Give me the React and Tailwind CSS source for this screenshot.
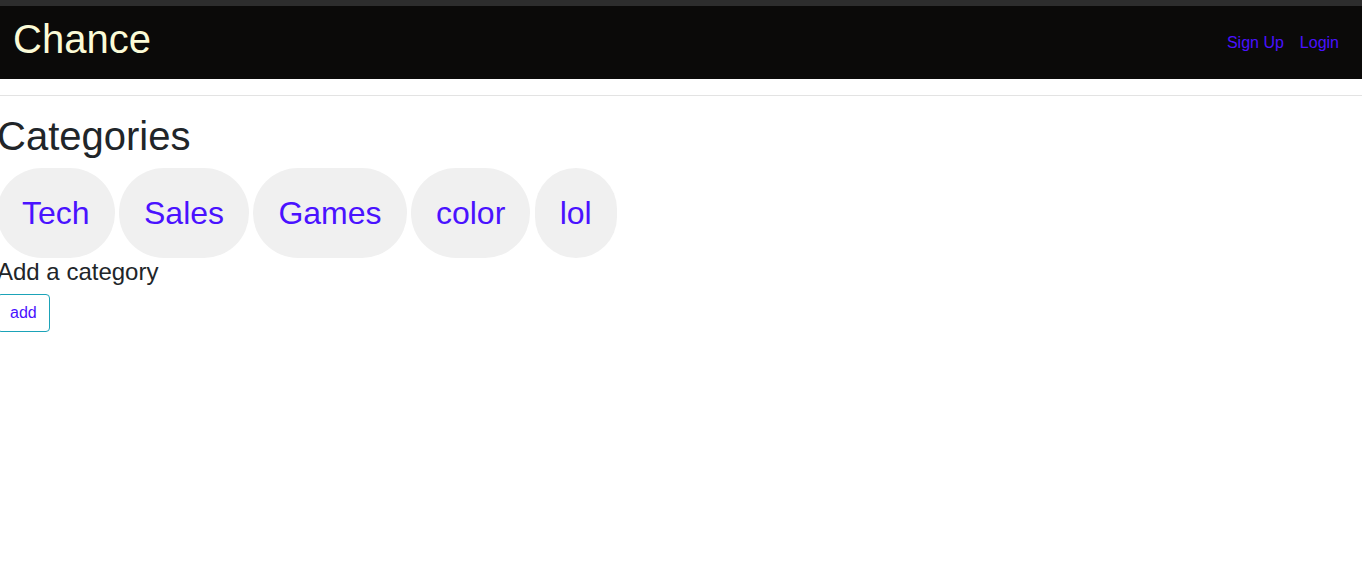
export default function App() {
  const cats = ["Tech", "Sales", "Games", "color", "lol"];
  return (
    <div className="min-h-[566px] bg-white" style={{ fontFamily: '"Liberation Sans", Arial, sans-serif' }}>
      <div className="h-[6px] bg-[#2d2d2d]" />
      <nav className="h-[73px] bg-[#0b0a09] flex items-start justify-between pl-[13px] pr-[23px]">
        <div className="text-[40px] leading-[48px] mt-[9px] text-[#fbfbd7]">Chance</div>
        <div className="flex gap-[16px] mt-[27px] text-[16px] leading-[20px] text-[#4a12ff]">
          <a>Sign Up</a>
          <a>Login</a>
        </div>
      </nav>
      <hr className="mt-[16px] mb-[16px] border-0 border-t border-[#e3e3e3]" />
      <div className="-ml-[3px] text-[#212529]">
        <h1 className="text-[40px] leading-[48px] mb-[8px]">Categories</h1>
        <div className="flex gap-[4.4px]">
          {cats.map((c) => (
            <div key={c} className="rounded-full bg-[#f0f0f0] px-[25px] py-[21px] text-[32px] leading-[48px] text-[#4a12ff]">
              {c}
            </div>
          ))}
        </div>
        <h4 className="text-[24px] leading-[28.8px] mb-[7px]">Add a category</h4>
        <button className="border border-[#1ba3b8] rounded-[4px] px-[12px] py-[6px] text-[16px] leading-[24px] text-[#4a12ff] bg-white">
          add
        </button>
      </div>
    </div>
  );
}
